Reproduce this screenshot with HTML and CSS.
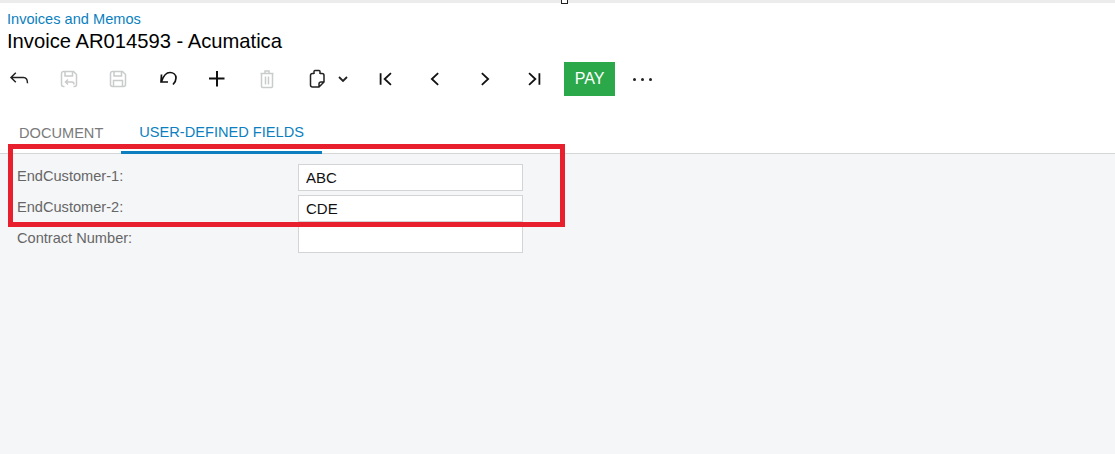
FILE: index.html
```html
<!DOCTYPE html>
<html lang="en">
<head>
  <meta charset="UTF-8">
  <title>Invoice AR014593 - Acumatica</title>
  <link rel="stylesheet" href="styles.css">
</head>
<body>
  <div class="top-band"><span class="top-handle"></span></div>

  <header class="page-head">
    <a class="breadcrumb" href="#">Invoices and Memos</a>
    <h1>Invoice AR014593 - Acumatica</h1>
  </header>

  <div class="toolbar">
    <button class="tool" title="Back">
      <svg viewBox="0 0 20 20"><path d="M2 8.500h12.500c2.500 0 4 1.800 4 5.800M6.800 3.700 2 8.500l4.800 4.800"/></svg>
    </button>
    <button class="tool off" title="Save and close">
      <svg viewBox="0 0 20 20"><path d="M5.500 17.500H4.500a2 2 0 0 1-2-2v-11a2 2 0 0 1 2-2h10l3 3v10a2 2 0 0 1-2 2h-1M6 2.500v4.500h7.500V2.500M6.500 13h6.500c1.500 0 2 1 2 2.500M9 10.500 6.500 13 9 15.500"/></svg>
    </button>
    <button class="tool off" title="Save">
      <svg viewBox="0 0 20 20"><path d="M4.500 2.500h10l3 3v10a2 2 0 0 1-2 2h-11a2 2 0 0 1-2-2v-11a2 2 0 0 1 2-2ZM6 2.500V7h7.500V2.500M5.500 17.500V11.500h9v6"/></svg>
    </button>
    <button class="tool" title="Cancel">
      <svg class="undo" viewBox="0 0 20 20"><path d="M3.500 5.500 3 13h7M3.500 12.500C5 8 8 3.500 12 3.500c3.500 0 6 2.300 6 5.500 0 2.500-1 4.500-3 6.500"/></svg>
    </button>
    <button class="tool" title="Add">
      <svg class="plus" viewBox="0 0 20 20"><path d="M10 2v15.500M2 9.500h15.500"/></svg>
    </button>
    <button class="tool off" title="Delete">
      <svg viewBox="0 0 20 20"><path d="M3.500 4.500h13M8 4.500v-2.500h4v2.500M4.500 4.500v13a1 1 0 0 0 1 1h9a1 1 0 0 0 1-1v-13M8.500 7.500v8M11.500 7.500v8"/></svg>
    </button>
    <button class="tool" title="Clipboard">
      <svg viewBox="0 0 20 20"><path d="M7 4.500H5.500a2 2 0 0 0-2 2v9.500a2 2 0 0 0 2 2h6.500l5-5V6.500a2 2 0 0 0-2-2H13M7 5V2.500q0-1 1-1h4q1 0 1 1V5M12 18v-3a2 2 0 0 1 2-2h3"/></svg>
    </button>
    <button class="tool caret" title="More">
      <svg viewBox="0 0 12 12"><path d="M2 4l4 4 4-4"/></svg>
    </button>
    <button class="tool after-caret" title="First">
      <svg class="nav" viewBox="0 0 20 20"><path d="M4 3.500v13M15.500 3.500 8.500 10l7 6.500"/></svg>
    </button>
    <button class="tool" title="Previous">
      <svg class="nav" viewBox="0 0 20 20"><path d="M13.500 3.500 6.500 10l7 6.500"/></svg>
    </button>
    <button class="tool" title="Next">
      <svg class="nav" viewBox="0 0 20 20"><path d="M6.500 3.500 13.500 10l-7 6.500"/></svg>
    </button>
    <button class="tool" title="Last">
      <svg class="nav" viewBox="0 0 20 20"><path d="M4.500 3.500 11.500 10l-7 6.500M16 3.500v13"/></svg>
    </button>
    <button class="pay">PAY</button>
    <button class="tool dots" title="More actions">
      <span></span><span></span><span></span>
    </button>
  </div>

  <nav class="tabs">
    <a class="tab" href="#">DOCUMENT</a>
    <a class="tab active" href="#">USER-DEFINED FIELDS</a>
  </nav>

  <main class="content">
    <div class="field">
      <label for="end1">EndCustomer-1:</label>
      <input id="end1" type="text" value="ABC">
    </div>
    <div class="field">
      <label for="end2">EndCustomer-2:</label>
      <input id="end2" type="text" value="CDE">
    </div>
    <div class="field">
      <label for="contract">Contract Number:</label>
      <input id="contract" type="text">
    </div>
    <!-- annotation drawn over the form -->
    <div class="highlight"></div>
  </main>
</body>
</html>
```

FILE: styles.css
```css
* {
  box-sizing: border-box;
}
html, body {
  height: 100%;
}
body {
  margin: 0;
  font-family: "Liberation Sans", Arial, sans-serif;
  background-color: #fff;
  color: #000;
  display: flex;
  flex-direction: column;
  overflow: hidden;
}
.top-band {
  height: 3px;
  background-color: #ececec;
  position: relative;
  flex: none;
}
.top-handle {
  position: absolute;
  left: 561px;
  top: -2px;
  width: 7px;
  height: 6px;
  background: #fff;
  border: 1px solid #222;
}
.page-head {
  padding: 8px 0 0 7px;
  flex: none;
}
.breadcrumb {
  display: block;
  font-size: 14.600px;
  line-height: 17px;
  color: #0b7fc0;
  text-decoration: none;
}
h1 {
  margin: 1px 0 0;
  font-size: 20.200px;
  line-height: 24px;
  font-weight: 400;
}
.toolbar {
  display: flex;
  align-items: center;
  gap: 11.600px;
  height: 34px;
  margin-top: 9px;
  flex: none;
}
.tool {
  width: 38px;
  height: 34px;
  padding: 0;
  border: none;
  background: none;
  display: flex;
  align-items: center;
  justify-content: center;
}
.tool svg {
  width: 20px;
  height: 20px;
  fill: none;
  stroke: #222;
  stroke-width: 1.500;
}
.tool.off svg {
  stroke: #c9cccc;
}
.tool svg.undo {
  stroke: #111;
  stroke-width: 1.700;
}
.tool svg.plus {
  stroke: #111;
  stroke-width: 2;
}
.tool svg.nav {
  width: 18px;
  height: 18px;
  stroke: #111;
  stroke-width: 2;
}
.tool.caret {
  width: 14px;
  margin-left: -11.600px;
}
.tool.caret svg {
  width: 12px;
  height: 12px;
  stroke-width: 1.800;
}
.tool.after-caret {
  margin-left: 5.500px;
}
.pay {
  width: 51px;
  height: 34px;
  padding: 0;
  margin-left: -1px;
  border: none;
  background-color: #2ba84a;
  color: #fff;
  font-family: inherit;
  font-size: 16px;
}
.tool.dots {
  width: 32px;
  margin-left: -0.600px;
  gap: 5px;
}
.dots span {
  width: 3px;
  height: 3px;
  border-radius: 50%;
  background-color: #222;
}
.tabs {
  display: flex;
  height: 39px;
  margin-top: 19px;
  padding-left: 1px;
  border-bottom: 1px solid #d6d8d8;
  flex: none;
}
.tab {
  padding: 10px 18px 0;
  font-size: 14.600px;
  line-height: 17px;
  color: #7a7a7a;
  text-decoration: none;
}
.tab.active {
  color: #0b7fc0;
  height: 39px;
  padding-top: 9px;
  border-bottom: 3px solid #0b7fc0;
}
.content {
  flex: 1;
  position: relative;
  background-color: #f5f6f8;
  padding-top: 10px;
}
.field {
  display: flex;
  align-items: center;
  height: 27px;
  margin-bottom: 4px;
  padding-left: 17px;
}
.field label {
  width: 281px;
  font-size: 14.600px;
  color: #666;
  position: relative;
  top: -2px;
}
.field input {
  width: 225px;
  height: 27px;
  padding: 0 7px 1px;
  border: 1px solid #d2d4d6;
  background: #fff;
  font-family: inherit;
  font-size: 15px;
  color: #111;
}
.highlight {
  position: absolute;
  left: 8px;
  top: -10px;
  width: 557px;
  height: 83px;
  border: 5px solid #e8202e;
  pointer-events: none;
}
```
